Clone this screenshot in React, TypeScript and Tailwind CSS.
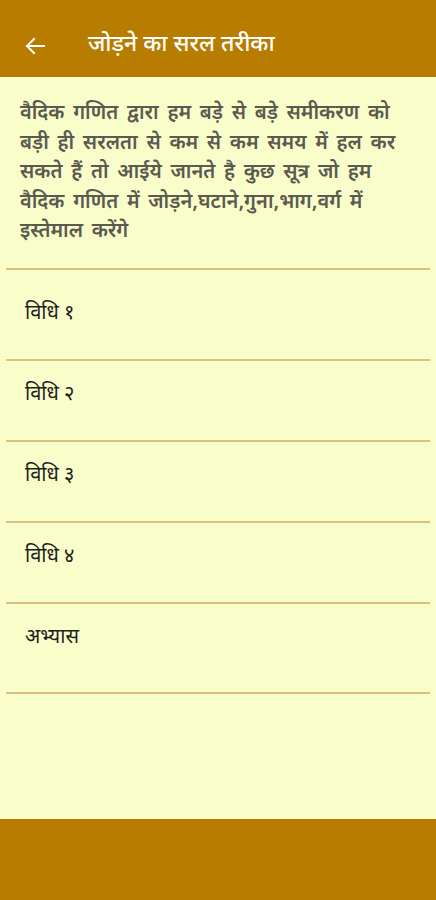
const items = ['विधि १', 'विधि २', 'विधि ३', 'विधि ४', 'अभ्यास'];

const lines = [
  'वैदिक गणित द्वारा हम बड़े से बड़े समीकरण को',
  'बड़ी ही सरलता से कम से कम समय में हल कर',
  'सकते हैं तो आईये जानते है कुछ सूत्र जो हम',
  'वैदिक गणित में जोड़ने,घटाने,गुना,भाग,वर्ग में',
  'इस्तेमाल करेंगे',
];

const hindi = { fontFamily: '"Noto Sans Devanagari", "Lohit Devanagari", "Noto Sans", "DejaVu Sans", sans-serif' };

function BackArrow() {
  return (
    <svg className="h-5 w-5" viewBox="0 0 20 20" fill="none" stroke="currentColor" strokeWidth={2} strokeLinecap="square">
      <path d="M2 10h17" />
      <path d="M9 3l-7 7 7 7" />
    </svg>
  );
}

export default function App() {
  return (
    <div className="flex h-[900px] w-[436px] flex-col bg-[#f9fdc9]" style={hindi}>
      <header className="flex h-[77px] shrink-0 items-center bg-[#b77c00] pt-[14px] text-white">
        <div className="ml-[25px]">
          <BackArrow />
        </div>
        <h1 className="ml-[43px] text-[23px] font-medium">जोड़ने का सरल तरीका</h1>
      </header>

      <main className="flex-1">
        <p className="pl-5 pr-2 pt-[23px] text-[20px] font-semibold leading-[29.5px] text-[#5a5a50] [word-spacing:3.5px]">
          {lines.map((line) => (
            <span key={line} className="block whitespace-nowrap">
              {line}
            </span>
          ))}
        </p>

        <div className="mx-[6px] mt-[20px] h-[2px] bg-[#d9c27c]" />
        <ul className="mx-[6px]">
          {items.map((item, i) => (
            <li
              key={item}
              className={`border-b-2 border-[#d9c27c] pl-[19px] text-[20px] text-[#1e1e1e] ${
                i === 0 ? 'h-[91px] pt-[29px]' : i === items.length - 1 ? 'h-[90px] pt-[19px]' : 'h-[81px] pt-[19px]'
              }`}
            >
              {item}
            </li>
          ))}
        </ul>
      </main>

      <footer className="h-[81px] shrink-0 bg-[#b77c00]" />
    </div>
  );
}
